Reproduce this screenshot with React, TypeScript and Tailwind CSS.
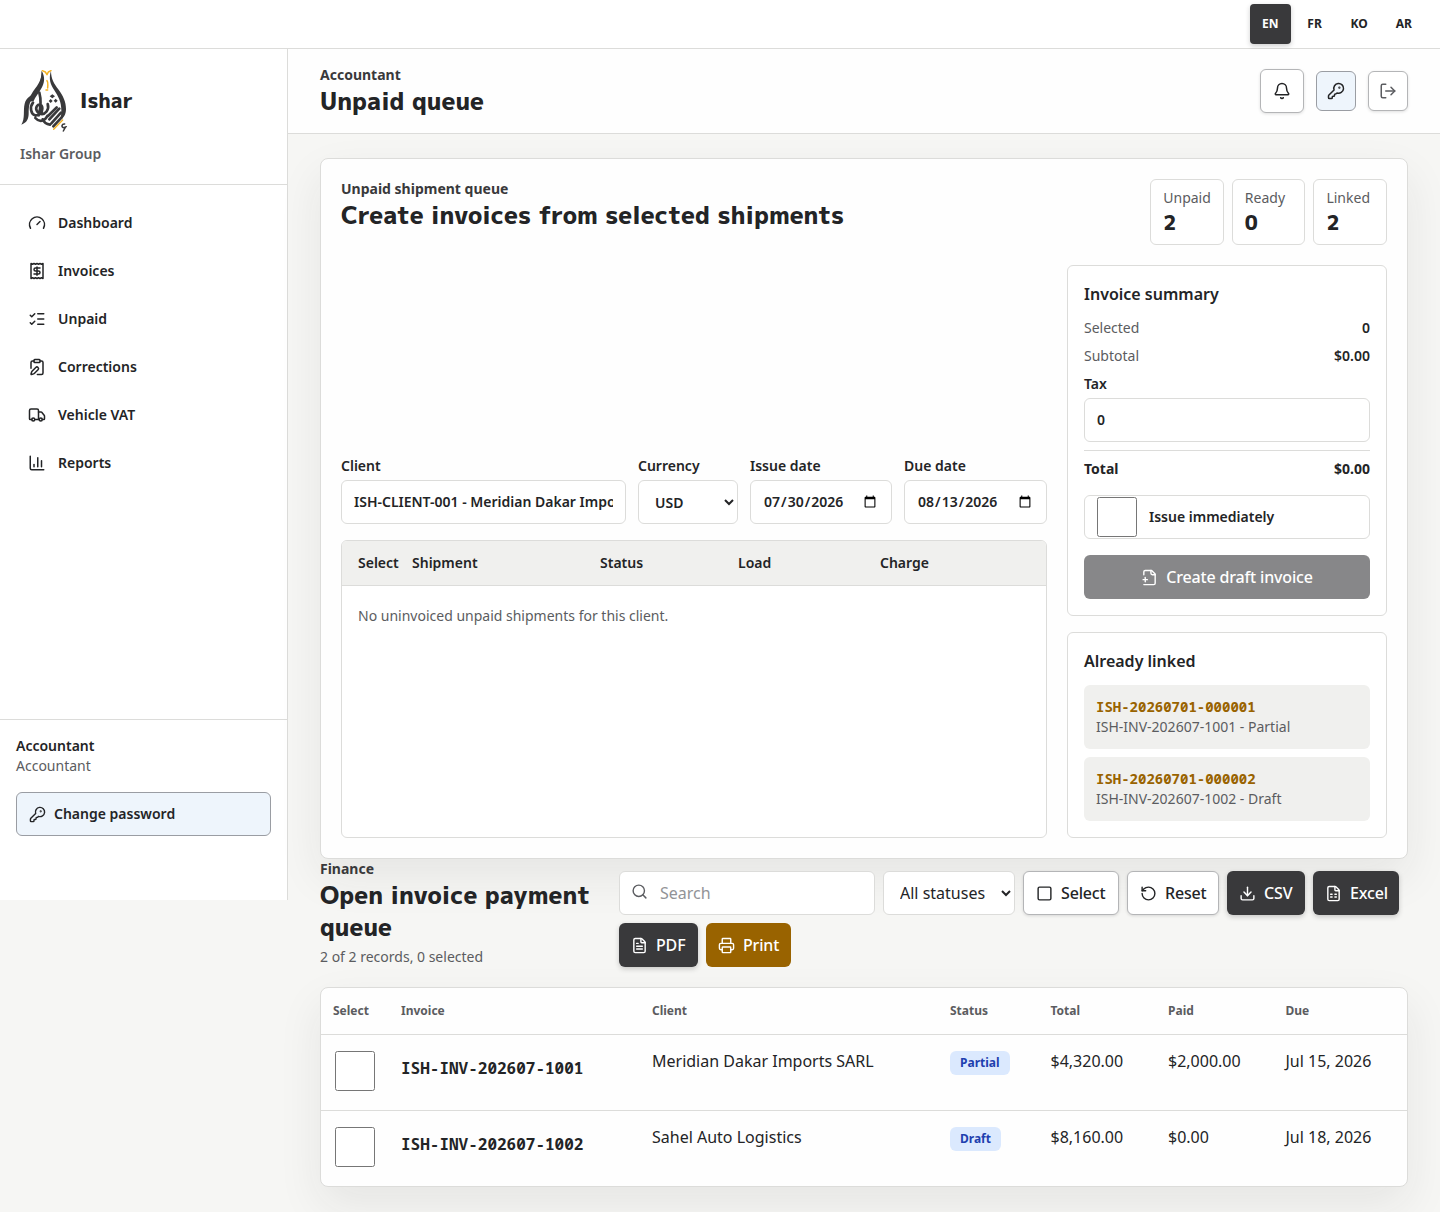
import React, { useState } from 'react';
import {
  Bell,
  ChartColumn,
  ClipboardPen,
  Download,
  FileSpreadsheet,
  FileText,
  Gauge,
  KeyRound,
  ListChecks,
  LogOut,
  Printer,
  Receipt,
  RotateCcw,
  Search,
  Square,
  Truck,
} from 'lucide-react';

const languages = ['EN', 'FR', 'KO', 'AR'];

const navItems = [
  { label: 'Dashboard', icon: Gauge },
  { label: 'Invoices', icon: Receipt },
  { label: 'Unpaid', icon: ListChecks },
  { label: 'Corrections', icon: ClipboardPen },
  { label: 'Vehicle VAT', icon: Truck },
  { label: 'Reports', icon: ChartColumn },
];

const stats = [
  { label: 'Unpaid', value: 2 },
  { label: 'Ready', value: 0 },
  { label: 'Linked', value: 2 },
];

const linked = [
  { shipment: 'ISH-20260701-000001', invoice: 'ISH-INV-202607-1001', status: 'Partial' },
  { shipment: 'ISH-20260701-000002', invoice: 'ISH-INV-202607-1002', status: 'Draft' },
];

const invoices = [
  { id: 'ISH-INV-202607-1001', client: 'Meridian Dakar Imports SARL', status: 'Partial', total: '$4,320.00', paid: '$2,000.00', due: 'Jul 15, 2026' },
  { id: 'ISH-INV-202607-1002', client: 'Sahel Auto Logistics', status: 'Draft', total: '$8,160.00', paid: '$0.00', due: 'Jul 18, 2026' },
];

const display = "font-['M_PLUS_1p','Noto_Sans',sans-serif] font-extrabold";
const mono = "font-['Noto_Sans_Mono','DejaVu_Sans_Mono',monospace] font-bold";
const field = 'h-11 w-full min-w-0 rounded-md border border-[#dcdcda] bg-white px-3 text-sm font-semibold text-[#232426]';
const btn = 'inline-flex h-11 items-center gap-2 rounded-md font-medium tracking-[-0.01em] whitespace-nowrap';
const lightBtn = `${btn} border border-[#b4b5b7] bg-white pl-3 shadow-[0_1px_3px_rgba(35,36,38,0.14)]`;
const darkBtn = `${btn} bg-[#39393b] pl-3 text-white shadow-[0_2px_5px_rgba(35,36,38,0.22)]`;
const cardShadow = 'shadow-[0_18px_45px_rgba(35,36,38,0.08)]';

function Logo() {
  return (
    <svg width="48" height="64" viewBox="60 57 144 192" fill="none" stroke="#39393b" strokeLinecap="round" strokeLinejoin="round">
      <g fill="#39393b" stroke="none">
        <path d="M125 62c6 22 3 36-7 54-9 14-18 24-23 36l-9 2c3-16 11-26 20-39 14-18 19-32 19-53Z" />
        <path d="M125 62c11 20 9 36-2 55-8 14-17 24-22 36l-12 2c3-16 11-26 20-39 12-18 16-32 16-54Z" />
        <path d="M108 133c-16 1-29 11-34 28-5 20 2 44-10 63 17-5 22-18 22-34 0-22 2-40 22-57Z" />
        <path d="M153 62c-8 24-1 42 9 57 13 20 22 36 22 62 0 14-1 22-6 30 13-6 20-18 20-34 0-22-9-40-22-58-14-19-23-32-23-57Z" />
        <path d="M157 133l8 6-8 6-8-6ZM167 146l6 6-6 6-6-6ZM152 147l6 6-6 6-6-6Z" />
      </g>
      <path d="M118 128c6 22 4 46-2 68M99 158c-11 14-6 34 6 38 12 2 22-8 22-20s-10-16-16-8 0 22 12 24 26-12 20-30M106 204c12 14 28 10 36-6" strokeWidth="8" />
      <path d="M144 198l26-26M148 208l30-32M154 220l29-32M160 229l25-27M128 208c4 10 12 15 22 16" strokeWidth="8" />
      <path d="M127 62l9 4 5 8 4-8 8-4" stroke="#f4b223" strokeWidth="4.500" />
      <path d="M141 92c5 6 2 12 2 22M138 120h5" stroke="#f4b223" strokeWidth="4.500" />
      <path d="M161 238l27-28" stroke="#f4b223" strokeWidth="4" />
      <path d="M194 222c-9-1-11 9-3 11l8-3M196 232l-6 11" strokeWidth="4.500" />
    </svg>
  );
}

function FilePlusIcon() {
  return (
    <svg width="17" height="17" viewBox="0 0 24 24" fill="none" stroke="currentColor" strokeWidth="2" strokeLinecap="round" strokeLinejoin="round">
      <path d="M4 22h14a2 2 0 0 0 2-2V7l-5-5H6a2 2 0 0 0-2 2v4" />
      <path d="M14 2v4a2 2 0 0 0 2 2h4" />
      <path d="M3 15h6" />
      <path d="M6 12v6" />
    </svg>
  );
}

function Sidebar() {
  return (
    <aside className="flex h-[851px] w-72 shrink-0 flex-col border-r border-[#dcdcda] bg-white">
      <div className="h-[136px] border-b border-[#dcdcda] px-5 pt-5">
        <div className="flex items-center gap-3">
          <Logo />
          <span className={`mb-0.5 text-xl leading-7 ${display}`}>Ishar</span>
        </div>
        <p className="mt-[11px] text-sm font-semibold text-[#5b5c60]">Ishar Group</p>
      </div>
      <nav className="flex flex-1 flex-col gap-1 px-4 py-4">
        {navItems.map(({ label, icon: Icon }) => (
          <a key={label} href="#" className="flex h-11 items-center gap-3 rounded-md px-3 text-sm font-semibold">
            <Icon size={18} />
            {label}
          </a>
        ))}
      </nav>
      <div className="h-[181px] border-t border-[#dcdcda] p-4">
        <p className="text-sm font-semibold">Accountant</p>
        <p className="text-sm text-[#5b5c60]">Accountant</p>
        <button className="mt-4 flex h-11 w-full items-center gap-2 rounded-md border border-[#9a9da3] bg-[#eef5fc] px-3 text-sm font-semibold">
          <KeyRound size={17} />
          Change password
        </button>
      </div>
    </aside>
  );
}

function ShipmentQueue() {
  return (
    <section className={`rounded-lg border border-[#dcdcda] bg-[#fefefe] p-5 ${cardShadow}`}>
      <div className="flex items-start justify-between">
        <div>
          <p className="text-sm font-bold text-[#39393b]">Unpaid shipment queue</p>
          <h2 className={`text-2xl ${display}`}>Create invoices from selected shipments</h2>
        </div>
        <div className="grid grid-cols-3 gap-2">
          {stats.map((s) => (
            <div key={s.label} className="rounded-md border border-[#dcdcda] bg-white px-3 py-2">
              <p className="text-sm text-[#5b5c60]">{s.label}</p>
              <p className={`text-xl ${display}`}>{s.value}</p>
            </div>
          ))}
        </div>
      </div>

      <div className="mt-5 grid grid-cols-[minmax(0,1fr)_320px] gap-5">
        <div className="flex flex-col justify-end gap-4">
          <div className="grid grid-cols-[285px_100px_142px_1fr] gap-3 text-sm font-semibold">
            <label className="grid gap-1">
              Client
              <input className={`${field} pb-0.5`} defaultValue="ISH-CLIENT-001 - Meridian Dakar Imports SARL" />
            </label>
            <label className="grid gap-1">
              Currency
              <select className={field}>
                <option>USD</option>
              </select>
            </label>
            <label className="grid gap-1">
              Issue date
              <input type="date" className={field} defaultValue="2026-07-30" />
            </label>
            <label className="grid gap-1">
              Due date
              <input type="date" className={field} defaultValue="2026-08-13" />
            </label>
          </div>
          <div className="h-[298px] overflow-hidden rounded-md border border-[#dcdcda] bg-white text-sm">
            <div className="grid h-[45px] grid-cols-[42px_176px_126px_130px_1fr] items-center gap-3 border-b border-[#dcdcda] bg-[#f0f0ee] px-4 font-semibold">
              <span>Select</span>
              <span>Shipment</span>
              <span>Status</span>
              <span>Load</span>
              <span>Charge</span>
            </div>
            <p className="px-4 py-5 text-[#5b5c60]">No uninvoiced unpaid shipments for this client.</p>
          </div>
        </div>

        <div className="flex flex-col gap-4">
          <div className="rounded-md border border-[#dcdcda] bg-white p-4 text-sm">
            <h3 className="text-base font-semibold">Invoice summary</h3>
            <div className="mt-3 flex flex-col gap-2">
              <div className="flex justify-between">
                <span className="text-[#5b5c60]">Selected</span>
                <span className="font-semibold">0</span>
              </div>
              <div className="flex justify-between">
                <span className="text-[#5b5c60]">Subtotal</span>
                <span className="font-semibold">$0.00</span>
              </div>
              <label className="grid gap-1 font-semibold">
                Tax
                <input className={`${field} pb-0.5`} defaultValue="0" />
              </label>
              <div className="flex justify-between border-t border-[#dcdcda] pt-2 font-bold">
                <span>Total</span>
                <span>$0.00</span>
              </div>
            </div>
            <label className="mt-4 flex h-11 items-center gap-3 rounded-md border border-[#dcdcda] px-3 font-semibold">
              <input type="checkbox" className="size-10" />
              Issue immediately
            </label>
            <button className={`${btn} mt-4 w-full justify-center bg-[#39393b] text-base text-white opacity-60`}>
              <FilePlusIcon />
              Create draft invoice
            </button>
          </div>

          <div className="rounded-md border border-[#dcdcda] bg-white p-4 text-sm">
            <h3 className="text-base font-semibold">Already linked</h3>
            <div className="mt-3 flex flex-col gap-2">
              {linked.map((l) => (
                <div key={l.shipment} className="rounded-md bg-[#f0f0ee] p-3">
                  <p className={`text-[#996300] ${mono}`}>{l.shipment}</p>
                  <p className="text-[#5b5c60]">{l.invoice} - {l.status}</p>
                </div>
              ))}
            </div>
          </div>
        </div>
      </div>
    </section>
  );
}

function PaymentQueue() {
  return (
    <section>
      <div className="flex items-end gap-4">
        <div className="w-[283px] shrink-0">
          <p className="text-sm font-bold text-[#39393b]">Finance</p>
          <h2 className={`text-2xl ${display}`}>Open invoice payment queue</h2>
          <p className="mt-1 text-sm text-[#5b5c60]">2 of 2 records, 0 selected</p>
        </div>
        <div className="flex flex-1 flex-wrap gap-2">
          <div className="relative w-64">
            <Search size={17} className="absolute top-[12px] left-3 text-[#5b5c60]" />
            <input placeholder="Search" className="h-11 w-full rounded-md border border-[#dcdcda] bg-white pr-3 pl-10 placeholder:text-[#929397]" />
          </div>
          <select className="h-11 w-[132px] rounded-md border border-[#dcdcda] bg-white px-3">
            <option>All statuses</option>
          </select>
          <button className={`${lightBtn} w-24`}><Square size={17} className="shrink-0" /> Select</button>
          <button className={`${lightBtn} w-[92px]`}><RotateCcw size={17} className="shrink-0" /> Reset</button>
          <button className={`${darkBtn} w-[78px]`}><Download size={17} className="shrink-0" /> CSV</button>
          <button className={`${darkBtn} w-[86px]`}><FileSpreadsheet size={17} className="shrink-0" /> Excel</button>
          <button className={`${darkBtn} w-[79px]`}><FileText size={17} className="shrink-0" /> PDF</button>
          <button className={`${btn} w-[85px] bg-[#996300] pl-3 text-white`}><Printer size={17} className="shrink-0" /> Print</button>
        </div>
      </div>

      <div className={`mt-5 overflow-hidden rounded-lg border border-[#dcdcda] bg-[#fefefe] ${cardShadow}`}>
        <table className="w-full table-fixed text-left">
          <colgroup>
            <col className="w-[68px]" />
            <col className="w-[251px]" />
            <col className="w-[298px]" />
            <col className="w-[100.5px]" />
            <col className="w-[117.5px]" />
            <col className="w-[117.5px]" />
            <col />
          </colgroup>
          <thead>
            <tr className="h-[46px] border-b border-[#dcdcda] text-xs text-[#5b5c60] [&>th]:px-3 [&>th]:font-bold">
              <th>Select</th>
              <th>Invoice</th>
              <th>Client</th>
              <th>Status</th>
              <th>Total</th>
              <th>Paid</th>
              <th>Due</th>
            </tr>
          </thead>
          <tbody>
            {invoices.map((inv) => (
              <tr key={inv.id} className="h-[76px] border-b border-[#dcdcda] align-top last:border-b-0 [&>td]:px-3 [&>td]:pt-[14px]">
                <td><input type="checkbox" className="mt-0.5 ml-0.5 block size-10" /></td>
                <td><span className={`mt-[7px] block ${mono}`}>{inv.id}</span></td>
                <td>{inv.client}</td>
                <td>
                  <span className="mt-0.5 inline-flex h-6 items-center rounded-md bg-[#dbe9fe] px-2.5 text-xs font-bold text-[#1e40af]">{inv.status}</span>
                </td>
                <td>{inv.total}</td>
                <td>{inv.paid}</td>
                <td>{inv.due}</td>
              </tr>
            ))}
          </tbody>
        </table>
      </div>
    </section>
  );
}

export default function App() {
  const [lang, setLang] = useState('EN');

  return (
    <div className="min-h-[1212px] bg-[#f6f6f4] font-['Noto_Sans',sans-serif] text-[#232426]">
      <div className="flex h-[49px] items-center justify-end gap-1 border-b border-[#dcdcda] bg-white px-4">
        {languages.map((l) => (
          <button
            key={l}
            onClick={() => setLang(l)}
            className={`h-10 min-w-10 rounded px-3 text-xs font-bold ${
              lang === l ? 'bg-[#39393b] text-white shadow-[0_2px_5px_rgba(35,36,38,0.22)]' : ''
            }`}
          >
            {l}
          </button>
        ))}
      </div>

      <div className="flex items-start">
        <Sidebar />
        <div className="min-w-0 flex-1">
          <header className="flex items-center justify-between border-b border-[#dcdcda] bg-[#fefefe] px-8 py-4">
            <div>
              <p className="text-sm font-bold text-[#39393b]">Accountant</p>
              <h1 className={`text-2xl ${display}`}>Unpaid queue</h1>
            </div>
            <div className="flex items-center gap-3">
              <button className="flex size-11 items-center justify-center rounded-md border border-[#b4b5b7] bg-white shadow-[0_1px_3px_rgba(35,36,38,0.14)]">
                <Bell size={18} />
              </button>
              <button className="flex size-10 items-center justify-center rounded-md border border-[#9a9da3] bg-[#eef5fc]">
                <KeyRound size={18} />
              </button>
              <button className="flex size-10 items-center justify-center rounded-md border border-[#b4b5b7] bg-white text-[#5b5c60] shadow-[0_1px_3px_rgba(35,36,38,0.14)]">
                <LogOut size={18} />
              </button>
            </div>
          </header>
          <main className="px-8 pt-6">
            <ShipmentQueue />
            <PaymentQueue />
          </main>
        </div>
      </div>
    </div>
  );
}
